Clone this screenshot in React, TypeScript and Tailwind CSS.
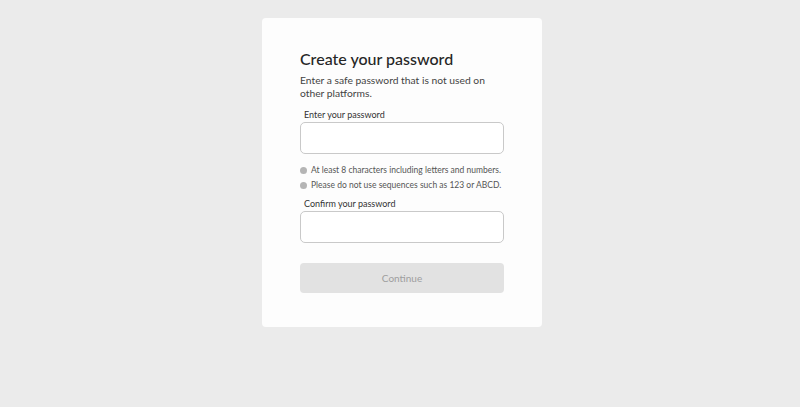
import React from 'react';

function Bullet({children}: {children: React.ReactNode}) {
  return (
    <li className="flex items-center gap-[4px]">
      <span className="w-[7px] h-[7px] rounded-full bg-[#b5b5b5] shrink-0"/>
      <span>{children}</span>
    </li>
  );
}

export default function App() {
  return (
    <div className="min-h-[407px] w-full bg-[#ebebeb] flex justify-center pt-[18px] pl-[4px]" style={{fontFamily: 'Lato, "Open Sans", sans-serif'}}>
      <div className="w-[280px] h-[309px] bg-[#fdfdfd] rounded-[4px] px-[38px] pt-[30px]">
        <h1 className="text-[16px] leading-[22px] text-[#262626] font-medium">Create your password</h1>
        <p className="mt-[4px] text-[10.3px] leading-[13px] text-[#444]">
          Enter a safe password that is not used on other platforms.
        </p>

        <label className="block mt-[9px] ml-[4px] text-[9px] leading-[12px] text-[#333]" htmlFor="pw">
          Enter your password
        </label>
        <input id="pw" type="password"
          className="block mt-[1px] w-[204px] h-[32px] rounded-[5px] border border-[#c9c9c9] bg-white outline-none"/>

        <ul className="mt-[11px] flex flex-col gap-[4px] text-[8.5px] leading-[11px] text-[#555]">
          <Bullet>At least 8 characters including letters and numbers.</Bullet>
          <Bullet>Please do not use sequences such as 123 or ABCD.</Bullet>
        </ul>

        <label className="block mt-[7px] ml-[4px] text-[9px] leading-[12px] text-[#333]" htmlFor="pw2">
          Confirm your password
        </label>
        <input id="pw2" type="password"
          className="block mt-[1px] w-[204px] h-[32px] rounded-[5px] border border-[#c9c9c9] bg-white outline-none"/>

        <button type="button" disabled
          className="mt-[20px] w-[204px] h-[30px] rounded-[4px] bg-[#e2e2e2] text-[10px] text-[#9e9e9e]">
          Continue
        </button>
      </div>
    </div>
  );
}
